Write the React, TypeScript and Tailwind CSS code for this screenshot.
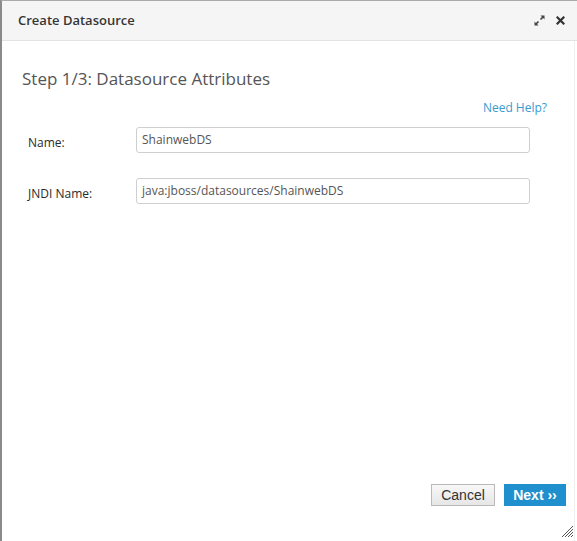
import React from 'react';

function ExpandIcon() {
  return (
    <svg width="11" height="11" viewBox="0 0 11 11" fill="#444">
      <path d="M6.5 0.5h4v4l-1.4-1.4-2 2-1.2-1.2 2-2z" />
      <path d="M4.5 10.5h-4v-4l1.4 1.4 2-2 1.2 1.2-2 2z" />
    </svg>
  );
}

function CloseIcon() {
  return (
    <svg width="9" height="9" viewBox="0 0 9 9" stroke="#333" strokeWidth="2.2" strokeLinecap="square">
      <path d="M1.5 1.5l6 6M7.5 1.5l-6 6" />
    </svg>
  );
}

function Field({ label, value }: { label: string; value: string }) {
  return (
    <div className="flex items-center">
      <label className="w-[134px] pl-[26px] pt-[6px] text-[12px] font-medium text-[#2a2a2a]">{label}</label>
      <div className="w-[394px] h-[26px] border border-[#cfcfcf] rounded-[3px] bg-white flex items-center px-[5px] text-[12px] text-[#555]">
        {value}
      </div>
    </div>
  );
}

export default function App() {
  return (
    <div
      className="w-[577px] h-[541px] bg-white flex flex-col border-l-[2px] border-l-[#8a8a8a] border-t border-t-[#a9a9a9] overflow-hidden relative"
      style={{ fontFamily: '"Open Sans", "Liberation Sans", sans-serif' }}
    >
      <div className="h-[40px] shrink-0 bg-[#f5f5f5] border-b border-[#e3e3e3] flex items-center pl-[16px] pr-[12px]">
        <span className="text-[13px] font-semibold text-[#363636] flex-1">Create Datasource</span>
        <div className="flex items-center gap-[11px]">
          <ExpandIcon />
          <CloseIcon />
        </div>
      </div>

      <div className="flex-1 flex flex-col border-r border-r-[#f0f0f0] mr-[2px]">
        <h2 className="mt-[26px] pl-[20px] text-[17px] text-[#555] leading-[24px]">Step 1/3: Datasource Attributes</h2>
        <div className="flex justify-end pr-[27px] mt-[8px]">
          <span className="text-[12px] text-[#3a9bcf]">Need Help?</span>
        </div>
        <div className="mt-[10px] flex flex-col gap-[25px]">
          <Field label="Name:" value="ShainwebDS" />
          <Field label="JNDI Name:" value="java:jboss/datasources/ShainwebDS" />
        </div>

        <div className="mt-auto flex justify-end gap-[9px] pr-[8px] mb-[35px]">
          <button
            className="w-[64px] h-[22px] border border-[#b9b9b9] bg-gradient-to-b from-[#f8f8f8] to-[#e6e6e6] text-[14px] text-[#333] leading-none"
            style={{ fontFamily: '"Liberation Sans", Arial, sans-serif' }}
          >
            Cancel
          </button>
          <button
            className="w-[62px] h-[22px] bg-[#1f8fcd] text-[14px] font-bold text-white leading-none"
            style={{ fontFamily: '"Liberation Sans", Arial, sans-serif' }}
          >
            Next ››
          </button>
        </div>
      </div>

      <svg className="absolute right-[3px] bottom-[3px]" width="13" height="13" viewBox="0 0 13 13" stroke="#555" strokeWidth="1">
        <path d="M12 1L1 12M12 4L4 12M12 7L7 12M12 10L10 12" />
      </svg>
    </div>
  );
}
